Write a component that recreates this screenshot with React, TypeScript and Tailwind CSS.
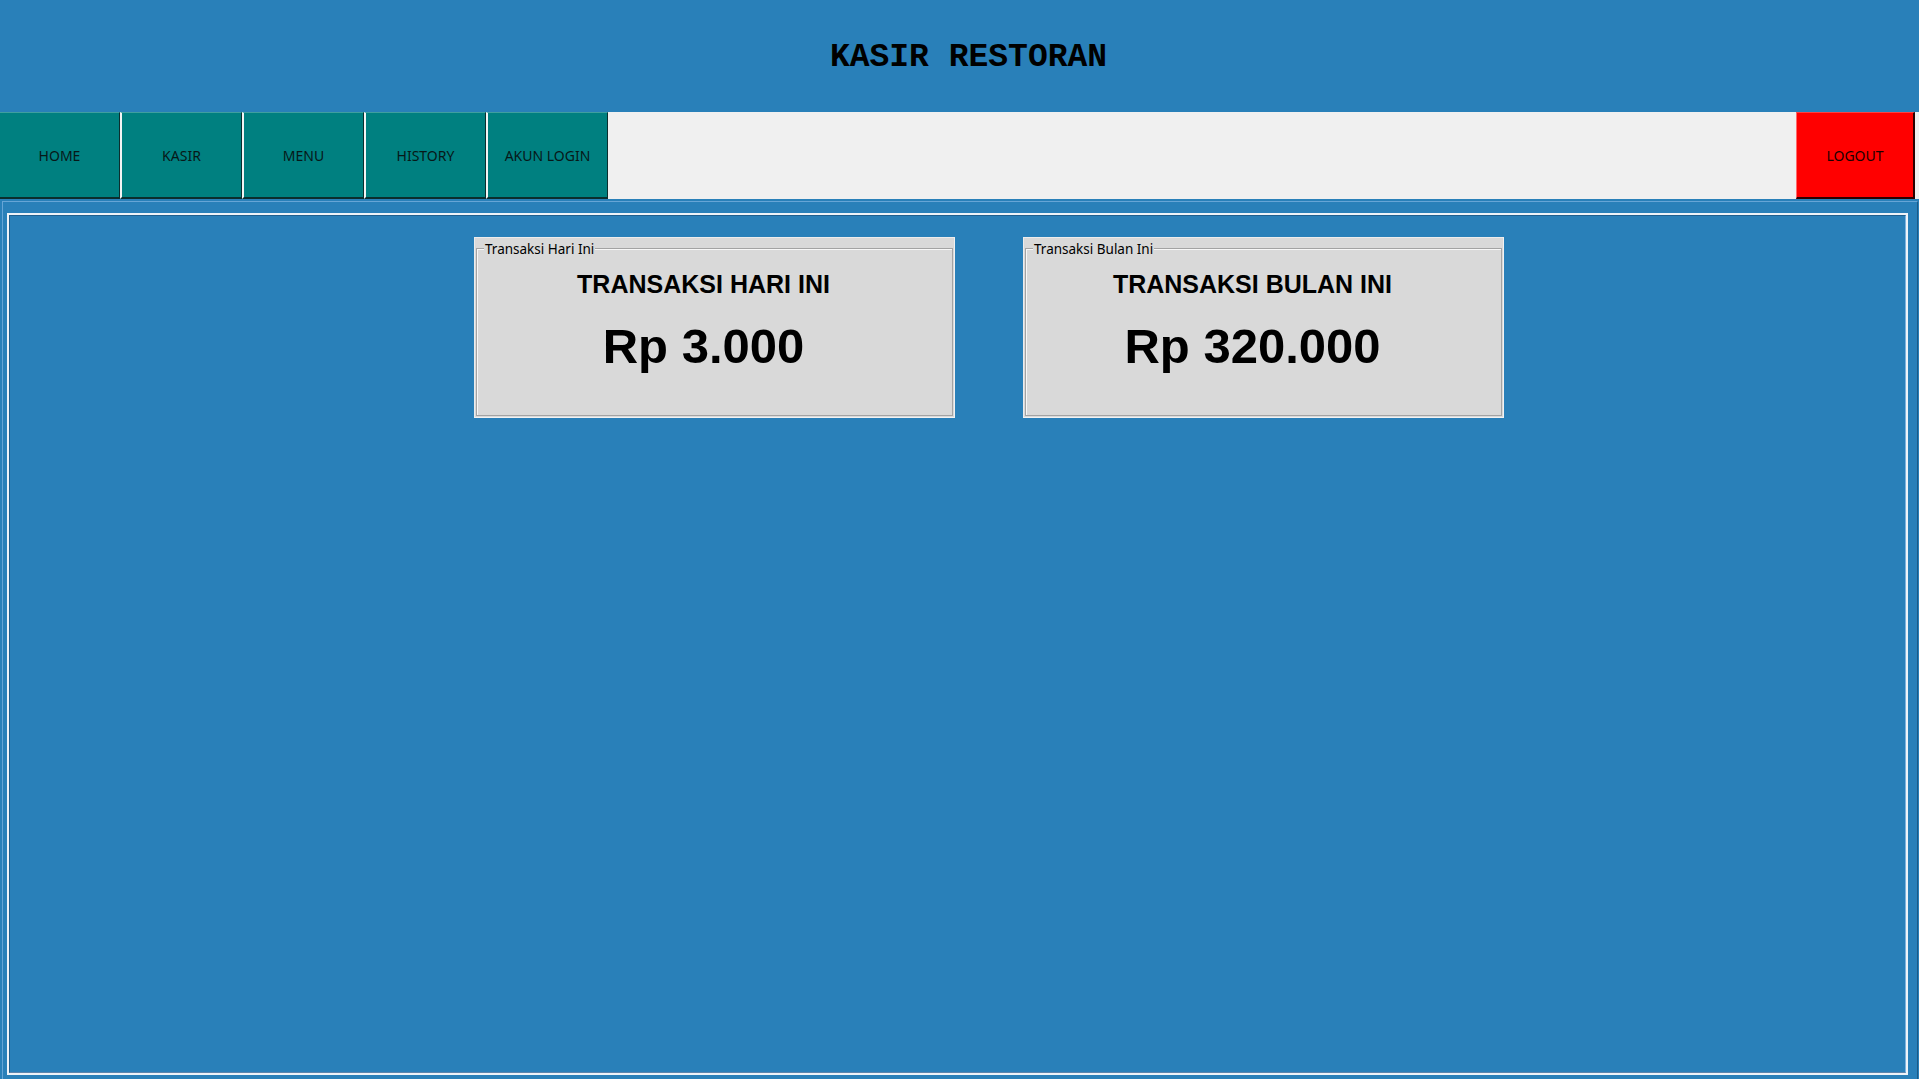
import React from "react";

const navItems = ["HOME", "KASIR", "MENU", "HISTORY", "AKUN LOGIN"];

function NavButton({ label, first }: { label: string; first?: boolean }) {
  return (
    <div
      className={
        (first ? "w-[120px] " : "w-[122px] border-l-2 border-l-[#f4f4f4] ") +
        "h-full flex items-center justify-center bg-[#008080] border-t border-t-[#3f9f9f] border-r border-r-[#0b2e2e] border-b-2 border-b-[#0b2e2e] text-[14px] text-[#071818] [font-family:'Noto_Sans',sans-serif]"
      }
    >
      {label}
    </div>
  );
}

function Card({ legend, title, amount }: { legend: string; title: string; amount: string }) {
  return (
    <div className="relative w-[481px] h-[181px] bg-[#d9d9d9] border border-t-[#ececec] border-l-[#ececec] border-r-[#f2f2f2] border-b-[#f2f2f2] px-[1px] pt-[10px] pb-[1px]">
      <div className="h-full border border-[#a3a3a3] shadow-[inset_1px_1px_0_#f7f7f7] flex flex-col items-center pr-[22px] pt-[21px] [font-family:'Liberation_Sans',Arial,sans-serif] font-bold text-black">
        <div className="text-[25px] leading-[29px]">{title}</div>
        <div className="text-[49px] leading-[57px] mt-[19px]">{amount}</div>
      </div>
      <span className="absolute left-[9px] top-[3px] px-[1px] bg-[#d9d9d9] text-[13.5px] leading-[16px] text-black [font-family:'Noto_Sans',sans-serif]">
        {legend}
      </span>
    </div>
  );
}

export default function App() {
  return (
    <div className="w-full h-[1079px] bg-[#2980b9] flex flex-col overflow-hidden">
      <header className="h-[112px] shrink-0 flex items-center justify-center pl-[18px] pt-[2px]">
        <h1 className="text-[33px] leading-none font-bold text-black [font-family:'Liberation_Mono','Courier_New',monospace]">
          KASIR RESTORAN
        </h1>
      </header>

      <nav className="h-[87px] shrink-0 flex bg-[#f0f0f0]">
        {navItems.map((item, i) => (
          <NavButton key={item} label={item} first={i === 0} />
        ))}
        <div className="flex-1" />
        <div className="w-[119px] h-full flex items-center justify-center bg-[#ff0000] border-l border-l-[#ff6a6a] border-t border-t-[#ff4040] border-r-2 border-r-[#2a0000] border-b-2 border-b-[#2a0000] text-[14px] text-[#1a0000] [font-family:'Noto_Sans',sans-serif]">
          LOGOUT
        </div>
        <div className="w-[4px]" />
      </nav>

      <main className="flex-1 mt-[2px] ml-[2px] mr-[1px] border-t border-l border-t-[#66a5d6] border-l-[#66a5d6] border-r border-r-[#1c5a86] pl-[4px] pr-[9px] pt-[11px] pb-[4px] flex flex-col">
        <div className="flex-1 border-2 border-[#eef3f8] flex flex-col">
          <div className="flex-1 border border-t-[#1f5f8f] border-l-[#1f5f8f] border-r-[#7fb3de] border-b-[#5d85ad] pl-[464px] pt-[21px]">
            <div className="flex gap-[68px]">
              <Card legend="Transaksi Hari Ini" title="TRANSAKSI HARI INI" amount="Rp 3.000" />
              <Card legend="Transaksi Bulan Ini" title="TRANSAKSI BULAN INI" amount="Rp 320.000" />
            </div>
          </div>
        </div>
      </main>
    </div>
  );
}
